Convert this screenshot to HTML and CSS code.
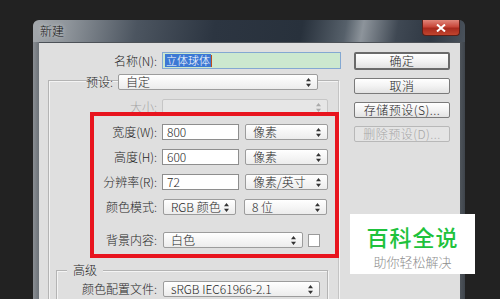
FILE: index.html
```html
<!DOCTYPE html>
<html lang="zh">
<head>
<meta charset="utf-8">
<link rel="stylesheet" href="styles.css">
</head>
<body>
<div class="window">
  <div class="titlebar">
    <span class="title">新建</span>
    <div class="close"><svg width="10" height="8" viewBox="0 0 10 8"><path d="M1 0.5L9 7.5M9 0.5L1 7.5" stroke="#fff" stroke-width="2"/></svg></div>
  </div>
  <div class="panel">
    <div class="leftcol">
      <div class="row namerow">
        <span class="label lw-name">名称(N):</span>
        <div class="nameinput"><span class="seltext">立体球体</span><span class="caret"></span></div>
      </div>
      <div class="group preset">
        <div class="row presetrow">
          <span class="label lw-preset">预设:</span>
          <div class="sel w-preset"><span>自定</span><svg class="arr" width="5" height="9" viewBox="0 0 5 9"><path d="M2.5 0L5 3.2H0zM2.5 9L0 5.8h5z" fill="#333"/></svg></div>
        </div>
        <div class="row">
          <span class="label lw disabled">大小:</span>
          <div class="sel w-size dis"><span></span><svg class="arr" width="5" height="9" viewBox="0 0 5 9"><path d="M2.5 0L5 3.2H0zM2.5 9L0 5.8h5z" fill="#aaa"/></svg></div>
        </div>
        <div class="row">
          <span class="label lw">宽度(W):</span>
          <div class="inp">800</div>
          <div class="sel w-unit"><span>像素</span><svg class="arr" width="5" height="9" viewBox="0 0 5 9"><path d="M2.5 0L5 3.2H0zM2.5 9L0 5.8h5z" fill="#333"/></svg></div>
        </div>
        <div class="row">
          <span class="label lw">高度(H):</span>
          <div class="inp">600</div>
          <div class="sel w-unit"><span>像素</span><svg class="arr" width="5" height="9" viewBox="0 0 5 9"><path d="M2.5 0L5 3.2H0zM2.5 9L0 5.8h5z" fill="#333"/></svg></div>
        </div>
        <div class="row">
          <span class="label lw">分辨率(R):</span>
          <div class="inp">72</div>
          <div class="sel w-unit"><span>像素/英寸</span><svg class="arr" width="5" height="9" viewBox="0 0 5 9"><path d="M2.5 0L5 3.2H0zM2.5 9L0 5.8h5z" fill="#333"/></svg></div>
        </div>
        <div class="row">
          <span class="label lw">颜色模式:</span>
          <div class="sel w-mode"><span>RGB 颜色</span><svg class="arr" width="5" height="9" viewBox="0 0 5 9"><path d="M2.5 0L5 3.2H0zM2.5 9L0 5.8h5z" fill="#333"/></svg></div>
          <div class="sel w-bits"><span>8 位</span><svg class="arr" width="5" height="9" viewBox="0 0 5 9"><path d="M2.5 0L5 3.2H0zM2.5 9L0 5.8h5z" fill="#333"/></svg></div>
        </div>
        <div class="row bgrow">
          <span class="label lw">背景内容:</span>
          <div class="sel w-bg"><span>白色</span><svg class="arr" width="5" height="9" viewBox="0 0 5 9"><path d="M2.5 0L5 3.2H0zM2.5 9L0 5.8h5z" fill="#333"/></svg></div>
          <div class="swatch"></div>
        </div>
        <div class="group advanced">
          <span class="legend">高级</span>
          <div class="row profrow">
            <span class="label lw-prof">颜色配置文件:</span>
            <div class="sel w-prof"><span>sRGB IEC61966-2.1</span><svg class="arr" width="5" height="9" viewBox="0 0 5 9"><path d="M2.5 0L5 3.2H0zM2.5 9L0 5.8h5z" fill="#333"/></svg></div>
          </div>
        </div>
      </div>
    </div>
    <div class="rightcol">
      <div class="btn default">确定</div>
      <div class="btn">取消</div>
      <div class="btn">存储预设(S)...</div>
      <div class="btn disabledbtn">删除预设(D)...</div>
    </div>
  </div>
</div>
<div class="highlight"></div>
<div class="watermark">
  <div class="wm-title">百科全说</div>
  <div class="wm-sub">助你轻松解决</div>
</div>
</body>
</html>
```

FILE: styles.css
```css
html, body {
  margin: 0;
  padding: 0;
}
body {
  width: 500px;
  height: 299px;
  overflow: hidden;
  background: #222222;
  font-family: "Noto Sans CJK SC", "Noto Sans", sans-serif;
  font-size: 12px;
  font-weight: 300;
  color: #262626;
  position: relative;
}
.window {
  margin: 20px 0 0 33px;
  width: 432px;
  height: 279px;
  border-radius: 6px 6px 0 0;
  background: linear-gradient(to right, #8a8e93 0, #6a7076 1.5%, #5a6066 98%, #3e444b 100%);
  display: flex;
  flex-direction: column;
  overflow: hidden;
}
.titlebar {
  height: 22px;
  flex: none;
  display: flex;
  align-items: flex-start;
  border-radius: 6px 6px 0 0;
  background: linear-gradient(100deg, #a4a8ac 0, #8f959b 8%, #4c5560 24%, #2c3541 42%, #28313c 62%, #56606a 72%, #8d949b 76%, #3f4853 84%, #2f3843 92%, #4a525b 100%);
}
.title {
  margin: 4px 0 0 7px;
  font-size: 12px;
  line-height: 14px;
  color: #141414;
  text-shadow: 0 0 4px rgba(255,255,255,0.7);
}
.close {
  margin-left: auto;
  margin-right: 5px;
  width: 38px;
  height: 16px;
  box-sizing: border-box;
  border: 1px solid #5c1f18;
  border-top: none;
  border-radius: 0 0 4px 4px;
  background: linear-gradient(#e0867a 0, #c8473a 45%, #a82a1e 55%, #c0452e 100%);
  display: flex;
  align-items: center;
  justify-content: center;
}
.panel {
  margin: 0 5px 0 6px;
  flex: 1;
  min-height: 0;
  overflow: hidden;
  background: #dfdfdf;
  border-top: 1px solid #4c5157;
  display: flex;
  padding-top: 9px;
}
.leftcol {
  width: 315px;
  display: flex;
  flex-direction: column;
}
.rightcol {
  width: 96px;
  display: flex;
  flex-direction: column;
  gap: 8px;
}
.row {
  display: flex;
  align-items: center;
  height: 16px;
  margin-top: 9px;
  flex: none;
}
.namerow {
  margin-top: 0;
  height: 17px;
}
.label {
  text-align: right;
  margin-right: 5px;
  white-space: nowrap;
  line-height: 16px;
}
.lw-name { width: 118px; }
.lw-preset { width: 64px; }
.lw { width: 108px; }
.lw-prof { width: 100px; }
.disabled { color: #a5a5a5; }
.nameinput {
  width: 179px;
  height: 17px;
  box-sizing: border-box;
  border: 1px solid #84a8d2;
  background: #cce8cf;
  display: flex;
  align-items: center;
  padding-left: 2px;
}
.seltext {
  background: #3c78d4;
  color: #ffffff;
  font-size: 11px;
  line-height: 13px;
  padding: 0 1px;
}
.caret {
  width: 1px;
  height: 12px;
  background: #c0501c;
}
.group {
  border: 1px solid #b4b4b4;
  box-shadow: inset 1px 1px 0 #f4f4f4, 1px 1px 0 #f4f4f4;
  display: flex;
  flex-direction: column;
  flex: none;
}
.preset {
  margin: 11px 0 0 9px;
  width: 289px;
  height: 260px;
  border-right-color: #c4c4c4;
}
.presetrow {
  margin-top: -7px;
}
.sel {
  box-sizing: border-box;
  height: 16px;
  border: 1px solid #9c9c9c;
  border-radius: 2px;
  background: linear-gradient(#ffffff, #ececec);
  display: flex;
  align-items: center;
  justify-content: space-between;
  padding: 0 6px 0 7px;
  line-height: 14px;
}
.sel.dis {
  background: #e6e6e6;
  border-color: #c6c6c6;
}
.arr { flex: none; }
.w-preset { width: 200px; }
.w-size { width: 166px; }
.w-unit { width: 83px; }
.w-mode { width: 73px; margin-left: 1px; }
.w-bits { width: 83px; margin-left: 8px; }
.w-bg { width: 140px; margin-left: 1px; }
.w-prof { width: 157px; margin-left: 1px; }
.inp {
  box-sizing: border-box;
  width: 77px;
  height: 16px;
  border: 1px solid #8e8e8e;
  background: #ffffff;
  padding-left: 4px;
  line-height: 14px;
  margin-right: 6px;
}
.bgrow { margin-top: 17px; }
.swatch {
  width: 12px;
  height: 13px;
  box-sizing: border-box;
  border: 1px solid #9a9a9a;
  background: #ffffff;
  margin-left: 5px;
}
.advanced {
  margin: 22px 0 0 7px;
  width: 270px;
  height: 60px;
}
.legend {
  align-self: flex-start;
  margin: -8px 0 0 10px;
  padding: 0 6px;
  background: #dfdfdf;
  line-height: 14px;
}
.profrow { margin-top: 4px; }
.btn {
  box-sizing: border-box;
  height: 16px;
  border: 1px solid #7a7a7a;
  border-radius: 2px;
  background: linear-gradient(#ffffff 0, #f3f3f3 50%, #e2e2e2 100%);
  text-align: center;
  line-height: 14px;
  letter-spacing: 0.5px;
  flex: none;
}
.btn.default {
  height: 18px;
  border: 2px solid #6a6a6a;
  line-height: 14px;
}
.btn.disabledbtn {
  color: #a7a7a7;
  border-color: #b8b8b8;
  background: #e4e4e4;
}
.highlight {
  position: absolute;
  left: 90px;
  top: 112px;
  width: 249px;
  height: 146px;
  box-sizing: border-box;
  border: 4px solid #e8141e;
}
.watermark {
  position: absolute;
  left: 350px;
  top: 214px;
  width: 125px;
  height: 60px;
  background: #ffffff;
  display: flex;
  flex-direction: column;
  align-items: center;
}
.wm-title {
  margin-top: 10px;
  font-size: 22px;
  line-height: 24px;
  color: #1ec23c;
  font-weight: 500;
  letter-spacing: 1px;
}
.wm-sub {
  margin-top: 7px;
  font-size: 13px;
  line-height: 14px;
  color: #8e8e8e;
}
```
